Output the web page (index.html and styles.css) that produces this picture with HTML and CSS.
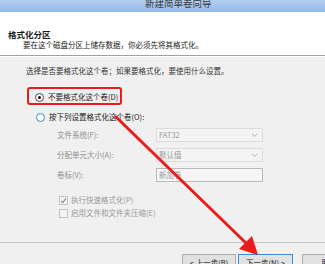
FILE: index.html
```html
<!DOCTYPE html>
<html>
<head>
<meta charset="utf-8">
<link rel="stylesheet" href="styles.css">
</head>
<body>
<div class="win">
  <div class="titlebar"><span class="title">新建简单卷向导</span></div>
  <div class="header">
    <div class="h-title">格式化分区</div>
    <div class="h-sub">要在这个磁盘分区上储存数据，你必须先将其格式化。</div>
  </div>
  <div class="content">
    <div class="intro">选择是否要格式化这个卷；如果要格式化，要使用什么设置。</div>
    <div class="opt opt1"><span class="radio on"></span><span>不要格式化这个卷(D)</span></div>
    <div class="opt opt2"><span class="radio"></span><span>按下列设置格式化这个卷(O):</span></div>
    <div class="form">
      <div class="lbl">文件系统(F):</div>
      <div class="ctl select"><span>FAT32</span><svg class="chev" width="7" height="5" viewBox="0 0 7 5"><path d="M1 1 L3.5 3.5 L6 1" fill="none" stroke="#b0b0b0" stroke-width="1"/></svg></div>
      <div class="lbl">分配单元大小(A):</div>
      <div class="ctl select"><span>默认值</span><svg class="chev" width="7" height="5" viewBox="0 0 7 5"><path d="M1 1 L3.5 3.5 L6 1" fill="none" stroke="#b0b0b0" stroke-width="1"/></svg></div>
      <div class="lbl">卷标(V):</div>
      <div class="ctl field"><span>新加卷</span></div>
    </div>
    <div class="checks">
      <div class="chk"><span class="box"><svg width="7" height="7" viewBox="0 0 7 7"><path d="M1 3.8 L2.8 5.6 L6 1.4" fill="none" stroke="#8a8a8a" stroke-width="1.2"/></svg></span><span>执行快速格式化(P)</span></div>
      <div class="chk"><span class="box"></span><span>启用文件和文件夹压缩(E)</span></div>
    </div>
  </div>
  <div class="footer">
    <div class="btn">&lt; 上一步(B)</div>
    <div class="btn focus">下一步(N) &gt;</div>
    <div class="btn cancel">取消</div>
  </div>
</div>
<div class="hl-box"></div>
<svg class="arrow" width="325" height="264" viewBox="0 0 325 264">
  <line x1="116" y1="117" x2="248" y2="245" stroke="#ec1c1c" stroke-width="3" stroke-linecap="round"/>
  <polygon points="258,255 239,249 252,236" fill="#ec1c1c"/>
</svg>
</body>
</html>
```

FILE: styles.css
```css
html, body {
  margin: 0;
  padding: 0;
}
body {
  width: 325px;
  height: 264px;
  overflow: hidden;
  position: relative;
  background: #f0f0f0;
  font-family: "Noto Sans CJK SC", "Liberation Sans", sans-serif;
  font-size: 7.5px;
  color: #1a1a1a;
}
.win {
  display: flex;
  flex-direction: column;
  width: 325px;
  height: 264px;
}
.titlebar {
  height: 12px;
  flex: none;
  background: linear-gradient(#b3cff2, #93b9ea);
  overflow: hidden;
  padding-left: 145px;
  box-sizing: border-box;
}
.title {
  display: block;
  font-size: 9.5px;
  line-height: 10px;
  margin-top: -2px;
  color: #3a3a3a;
}
.header {
  height: 44px;
  flex: none;
  background: #fff;
  box-sizing: border-box;
  padding: 17px 0 0 8px;
  border-bottom: 1px solid #a0a0a0;
}
.h-title {
  font-weight: bold;
  font-size: 8.5px;
  line-height: 10px;
  color: #1a1a1a;
}
.h-sub {
  line-height: 10px;
  margin-top: 1px;
  padding-left: 15px;
}
.content {
  flex: none;
  height: 186px;
  border-top: 1px solid #fff;
  box-sizing: border-box;
  padding-top: 9px;
  display: flex;
  flex-direction: column;
}
.intro {
  line-height: 10px;
  padding-left: 26px;
  color: #333;
}
.opt {
  display: flex;
  align-items: center;
  height: 10px;
  line-height: 10px;
  padding-left: 35px;
  gap: 4px;
}
.opt1 { margin-top: 16px; }
.opt2 { margin-top: 10px; padding-left: 36px; }
.radio {
  width: 7px;
  height: 7px;
  border-radius: 50%;
  border: 1px solid #4a4a4a;
  background: #fff;
  box-sizing: content-box;
  position: relative;
  flex: none;
}
.radio.on::after {
  content: "";
  position: absolute;
  left: 2px;
  top: 2px;
  width: 3px;
  height: 3px;
  border-radius: 50%;
  background: #111;
}
.opt2 .radio { border-color: #3a86d4; }
.form {
  display: grid;
  grid-template-columns: 99px 107px;
  grid-auto-rows: 14px;
  row-gap: 6px;
  margin-top: 6px;
  padding-left: 57px;
}
.lbl {
  color: #8e8e8e;
  line-height: 14px;
}
.ctl {
  box-sizing: border-box;
  display: flex;
  align-items: center;
  justify-content: space-between;
  padding: 0 4px 0 2px;
  color: #9a9a9a;
  line-height: 12px;
}
.select {
  border: 1px solid #dcdcdc;
  background: #f3f3f3;
}
.field {
  border: 1px solid #b9b9b9;
  background: #f5f5f5;
}
.checks {
  margin-top: 13px;
  padding-left: 59px;
  display: flex;
  flex-direction: column;
  gap: 3px;
}
.chk {
  display: flex;
  align-items: center;
  gap: 3px;
  height: 10px;
  line-height: 10px;
  color: #9a9a9a;
}
.box {
  width: 7px;
  height: 7px;
  border: 1px solid #c4c4c4;
  background: #f4f4f4;
  display: flex;
  align-items: center;
  justify-content: center;
  flex: none;
}
.footer {
  flex: none;
  border-top: 1px solid #c8c8c8;
  display: flex;
  padding: 11px 0 0 182px;
  gap: 2px;
  height: 30px;
  box-sizing: border-box;
}
.btn {
  width: 54px;
  height: 20px;
  box-sizing: border-box;
  border: 1px solid #adadad;
  background: #e1e1e1;
  text-align: center;
  line-height: 16px;
  font-size: 7.5px;
  color: #222;
  flex: none;
}
.btn.focus {
  width: 55px;
  border: 1px solid #3c8ad6;
  box-shadow: inset 0 0 0 1px #d4e5f7;
}
.btn.cancel {
  margin-left: 7px;
}
.hl-box {
  position: absolute;
  left: 27px;
  top: 87px;
  width: 95px;
  height: 18px;
  box-sizing: border-box;
  border: 2.5px solid #ec1c1c;
  border-radius: 3px;
}
.arrow {
  position: absolute;
  left: 0;
  top: 0;
}
```
